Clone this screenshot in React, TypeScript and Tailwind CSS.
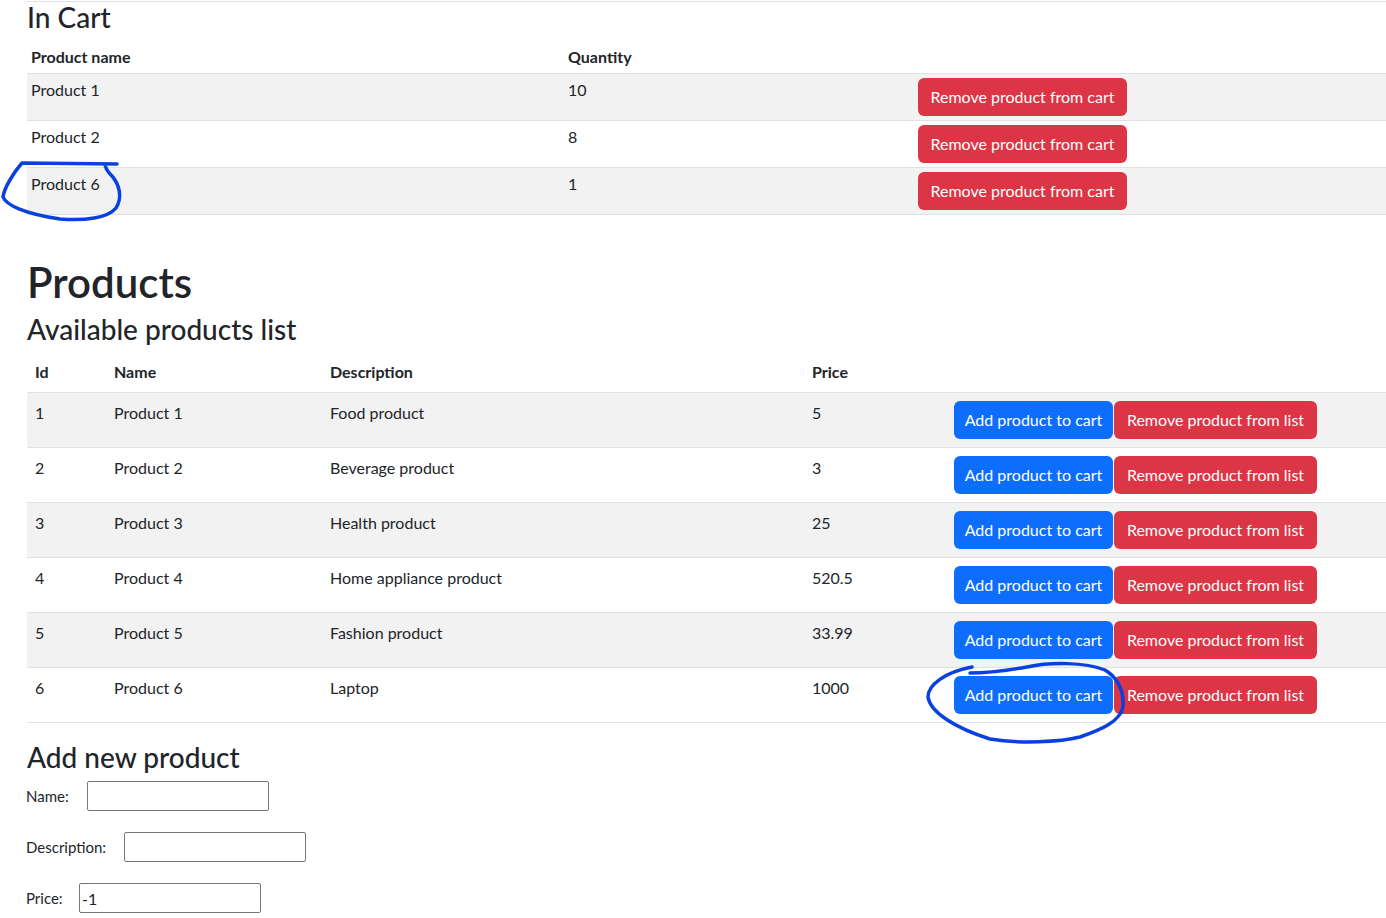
import React from "react";

const cart = [
  { name: "Product 1", qty: 10 },
  { name: "Product 2", qty: 8 },
  { name: "Product 6", qty: 1 },
];

const products = [
  { id: 1, name: "Product 1", description: "Food product", price: "5" },
  { id: 2, name: "Product 2", description: "Beverage product", price: "3" },
  { id: 3, name: "Product 3", description: "Health product", price: "25" },
  { id: 4, name: "Product 4", description: "Home appliance product", price: "520.5" },
  { id: 5, name: "Product 5", description: "Fashion product", price: "33.99" },
  { id: 6, name: "Product 6", description: "Laptop", price: "1000" },
];

export default function App() {
  return (
    <div className="relative min-h-screen w-full overflow-hidden bg-white text-[#212529] font-[family-name:'Segoe_UI',Lato,sans-serif] text-base leading-6">
      <div className="pl-[27px]">
        <div className="mt-px border-t border-[#dee2e6]" />

        {/* In Cart */}
        <h3 className="text-[28px] leading-[30px] font-medium mb-[9px]">In Cart</h3>
        <table className="w-full table-fixed border-collapse mb-[42px]">
          <colgroup>
            <col className="w-[537px]" />
            <col className="w-[350px]" />
            <col />
          </colgroup>
          <thead>
            <tr className="border-b border-[#dee2e6] text-left">
              <th className="px-1 py-1 font-bold">Product name</th>
              <th className="px-1 py-1 font-bold">Quantity</th>
              <th className="px-1 py-1"></th>
            </tr>
          </thead>
          <tbody>
            {cart.map((item, idx) => (
              <tr
                key={item.name}
                className={
                  "border-b border-[#dee2e6] align-top " +
                  (idx % 2 === 0 ? "bg-[#f2f2f2]" : "bg-white")
                }
              >
                <td className="px-1 py-1">{item.name}</td>
                <td className="px-1 py-1">{item.qty}</td>
                <td className="px-1 py-1">
                  <button className="w-[209px] h-[38px] rounded-[6px] bg-[#dc3545] text-white text-base">
                    Remove product from cart
                  </button>
                </td>
              </tr>
            ))}
          </tbody>
        </table>

        {/* Products */}
        <h1 className="text-[42px] leading-[50px] font-semibold mb-[5px]">Products</h1>
        <h3 className="text-[28px] leading-[34px] font-medium mb-[6px]">Available products list</h3>
        <table className="w-full table-fixed border-collapse mb-[17px]">
          <colgroup>
            <col className="w-[79px]" />
            <col className="w-[216px]" />
            <col className="w-[482px]" />
            <col className="w-[142px]" />
            <col />
          </colgroup>
          <thead>
            <tr className="border-b border-[#dee2e6] text-left">
              <th className="p-2 font-bold">Id</th>
              <th className="p-2 font-bold">Name</th>
              <th className="p-2 font-bold">Description</th>
              <th className="p-2 font-bold">Price</th>
              <th className="p-2"></th>
            </tr>
          </thead>
          <tbody>
            {products.map((p, idx) => (
              <tr
                key={p.id}
                className={
                  "border-b border-[#dee2e6] align-top " +
                  (idx % 2 === 0 ? "bg-[#f2f2f2]" : "bg-white")
                }
              >
                <td className="p-2">{p.id}</td>
                <td className="p-2">{p.name}</td>
                <td className="p-2">{p.description}</td>
                <td className="p-2">{p.price}</td>
                <td className="p-2">
                  <div className="flex gap-px">
                    <button className="w-[159px] h-[38px] rounded-[6px] bg-[#0d6efd] text-white text-base">
                      Add product to cart
                    </button>
                    <button className="w-[203px] h-[38px] rounded-[6px] bg-[#dc3545] text-white text-base">
                      Remove product from list
                    </button>
                  </div>
                </td>
              </tr>
            ))}
          </tbody>
        </table>

        {/* Add new product */}
        <h3 className="text-[28px] leading-[34px] font-medium mb-[7px]">Add new product</h3>
        <div className="flex flex-col gap-[21px] text-[15px]">
          <div className="flex items-center -ml-px">
            <label className="w-[61px]">Name:</label>
            <input className="w-[182px] h-[30px] border border-[#767676] rounded-[2px] px-[2px] text-base" />
          </div>
          <div className="flex items-center -ml-px">
            <label className="w-[98px]">Description:</label>
            <input className="w-[182px] h-[30px] border border-[#767676] rounded-[2px] px-[2px] text-base" />
          </div>
          <div className="flex items-center -ml-px">
            <label className="w-[53px]">Price:</label>
            <input
              defaultValue="-1"
              className="w-[182px] h-[30px] border border-[#767676] rounded-[2px] px-[2px] text-base"
            />
          </div>
        </div>
      </div>

      {/* hand-drawn annotations */}
      <svg
        className="absolute left-0 top-0 pointer-events-none"
        width="1386"
        height="918"
        viewBox="0 0 1386 918"
        fill="none"
      >
        <path
          d="M117,164 L22,163 C14,172 4,188 3,197 C6,205 25,214 60,219 C85,221 108,218 116,208 C123,197 119,184 112,176 C107,171 105,168 105,164"
          stroke="#0a40e0"
          strokeWidth="3.5"
          strokeLinecap="round"
          strokeLinejoin="round"
        />
        <path
          d="M972,667 C945,672 928,685 928,697 C930,712 955,728 990,739 C1020,744 1060,742 1080,737 C1100,730 1120,722 1123,707 C1124,690 1118,678 1105,670 C1085,662 1050,662 1027,667 C1010,670 990,673 970,673"
          stroke="#0a40e0"
          strokeWidth="3.5"
          strokeLinecap="round"
          strokeLinejoin="round"
        />
      </svg>
    </div>
  );
}
